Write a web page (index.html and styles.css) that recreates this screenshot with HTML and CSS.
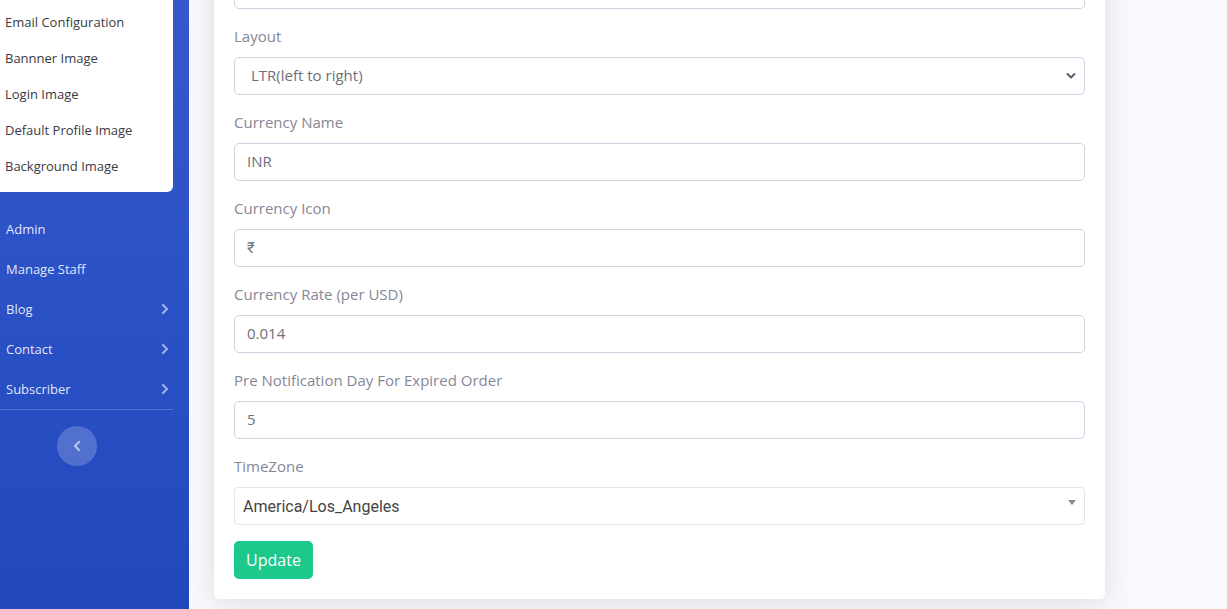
FILE: index.html
```html
<!DOCTYPE html>
<html lang="en">
<head>
<meta charset="utf-8">
<title>Settings</title>
<link rel="stylesheet" href="styles.css">
</head>
<body>
<aside class="sidebar">
  <div class="sidebar-inner">
    <div class="submenu">
      <a class="sub-link">Email Configuration</a>
      <a class="sub-link">Bannner Image</a>
      <a class="sub-link">Login Image</a>
      <a class="sub-link">Default Profile Image</a>
      <a class="sub-link">Background Image</a>
    </div>
    <nav class="nav">
      <a class="nav-link">Admin</a>
      <a class="nav-link">Manage Staff</a>
      <a class="nav-link">Blog<svg class="chev" viewBox="0 0 8 12" width="8" height="12"><path d="M2 2l4 4-4 4" fill="none" stroke="currentColor" stroke-width="2.2" stroke-linecap="round" stroke-linejoin="round"/></svg></a>
      <a class="nav-link">Contact<svg class="chev" viewBox="0 0 8 12" width="8" height="12"><path d="M2 2l4 4-4 4" fill="none" stroke="currentColor" stroke-width="2.2" stroke-linecap="round" stroke-linejoin="round"/></svg></a>
      <a class="nav-link">Subscriber<svg class="chev" viewBox="0 0 8 12" width="8" height="12"><path d="M2 2l4 4-4 4" fill="none" stroke="currentColor" stroke-width="2.2" stroke-linecap="round" stroke-linejoin="round"/></svg></a>
    </nav>
    <div class="divider"></div>
    <button class="toggle" type="button" aria-label="Collapse sidebar"><svg viewBox="0 0 8 12" width="8" height="12"><path d="M6 2L2 6l4 4" fill="none" stroke="currentColor" stroke-width="2.2" stroke-linecap="round" stroke-linejoin="round"/></svg></button>
  </div>
</aside>
<main class="content">
  <form class="card">
    <div class="form-group">
      <input class="form-control" type="text" value="">
    </div>
    <div class="form-group">
      <label class="label">Layout</label>
      <div class="select-wrap">
        <select class="form-control select"><option>LTR(left to right)</option></select>
        <svg class="select-arrow" viewBox="0 0 10 8" width="10" height="8"><path d="M1.5 2l3.5 3.5L8.5 2" fill="none" stroke="#5a5c69" stroke-width="2" stroke-linecap="round" stroke-linejoin="round"/></svg>
      </div>
    </div>
    <div class="form-group">
      <label class="label">Currency Name</label>
      <input class="form-control" type="text" value="INR">
    </div>
    <div class="form-group">
      <label class="label">Currency Icon</label>
      <input class="form-control" type="text" value="₹">
    </div>
    <div class="form-group">
      <label class="label">Currency Rate (per USD)</label>
      <input class="form-control" type="text" value="0.014">
    </div>
    <div class="form-group">
      <label class="label">Pre Notification Day For Expired Order</label>
      <input class="form-control" type="text" value="5">
    </div>
    <div class="form-group">
      <label class="label">TimeZone</label>
      <div class="select2">
        <span class="select2-text">America/Los_Angeles</span>
        <span class="select2-arrow"></span>
      </div>
    </div>
    <button class="btn" type="button">Update</button>
  </form>
</main>
</body>
</html>
```
FILE: styles.css
```css
* { box-sizing: border-box; }
html, body { margin: 0; height: 100%; }
body {
  display: flex;
  overflow: hidden;
  font-family: "Open Sans", Roboto, sans-serif;
  background: #f8f9fc;
}
.sidebar {
  width: 189px;
  flex: 0 0 189px;
  background: linear-gradient(180deg, #3459cd 0%, #2a50c5 55%, #2248be 100%);
}
.sidebar-inner {
  width: 173px;
  display: flex;
  flex-direction: column;
}
.submenu {
  background: #fff;
  border-bottom-right-radius: 6px;
  padding: 4px 0 8px;
  margin-bottom: 17px;
}
.sub-link {
  display: block;
  height: 36px;
  line-height: 36px;
  padding-left: 5px;
  font-size: 13px;
  color: #3a3b45;
}
.nav { display: flex; flex-direction: column; }
.nav-link {
  height: 40px;
  display: flex;
  align-items: center;
  justify-content: space-between;
  padding: 0 4px 0 6px;
  font-size: 13px;
  color: rgba(255,255,255,0.88);
}
.chev { color: rgba(255,255,255,0.55); }
.divider {
  height: 1px;
  background: rgba(255,255,255,0.2);
}
.toggle {
  margin: 16px 0 0 57px;
  width: 40px;
  height: 40px;
  border-radius: 50%;
  border: 0;
  padding: 0;
  background: rgba(255,255,255,0.2);
  color: rgba(255,255,255,0.6);
  display: flex;
  align-items: center;
  justify-content: center;
}
.content {
  flex: 1;
  padding-left: 25px;
}
.card {
  width: 891px;
  margin: -49px 0 0;
  padding: 20px;
  background: #fff;
  border-radius: 5px;
  box-shadow: 0 2px 28px 0 rgba(58,59,69,0.15);
}
.form-group + .form-group { margin-top: 17px; }
.label {
  display: block;
  height: 22px;
  line-height: 20px;
  margin-bottom: 9px;
  font-size: 15px;
  color: #858796;
}
.form-control {
  display: block;
  width: 100%;
  height: 38px;
  padding: 0 12px 2px;
  border: 1px solid #d1d3e2;
  border-radius: 5px;
  font-family: inherit;
  font-size: 15px;
  color: #6e707e;
  background: #fff;
  outline: none;
}
.select-wrap { position: relative; }
.select {
  appearance: none;
  -webkit-appearance: none;
  padding-left: 16px;
}
.select-arrow {
  position: absolute;
  right: 9px;
  top: 15px;
}
.select2 {
  position: relative;
  height: 38px;
  border: 1px solid #e1e4ea;
  border-radius: 4px;
  display: flex;
  align-items: center;
  padding-left: 8px;
}
.select2-text {
  font-family: Roboto, "Open Sans", sans-serif;
  font-size: 16px;
  color: #444;
}
.select2-arrow {
  position: absolute;
  right: 8px;
  top: 12px;
  border-style: solid;
  border-width: 5px 4px 0 4px;
  border-color: #888 transparent transparent transparent;
}
.btn {
  margin-top: 16px;
  height: 38px;
  width: 79px;
  padding: 0 0 1px;
  border: 0;
  border-radius: 5px;
  background: #1cc88a;
  color: #fff;
  font-family: inherit;
  font-size: 16px;
}
```
